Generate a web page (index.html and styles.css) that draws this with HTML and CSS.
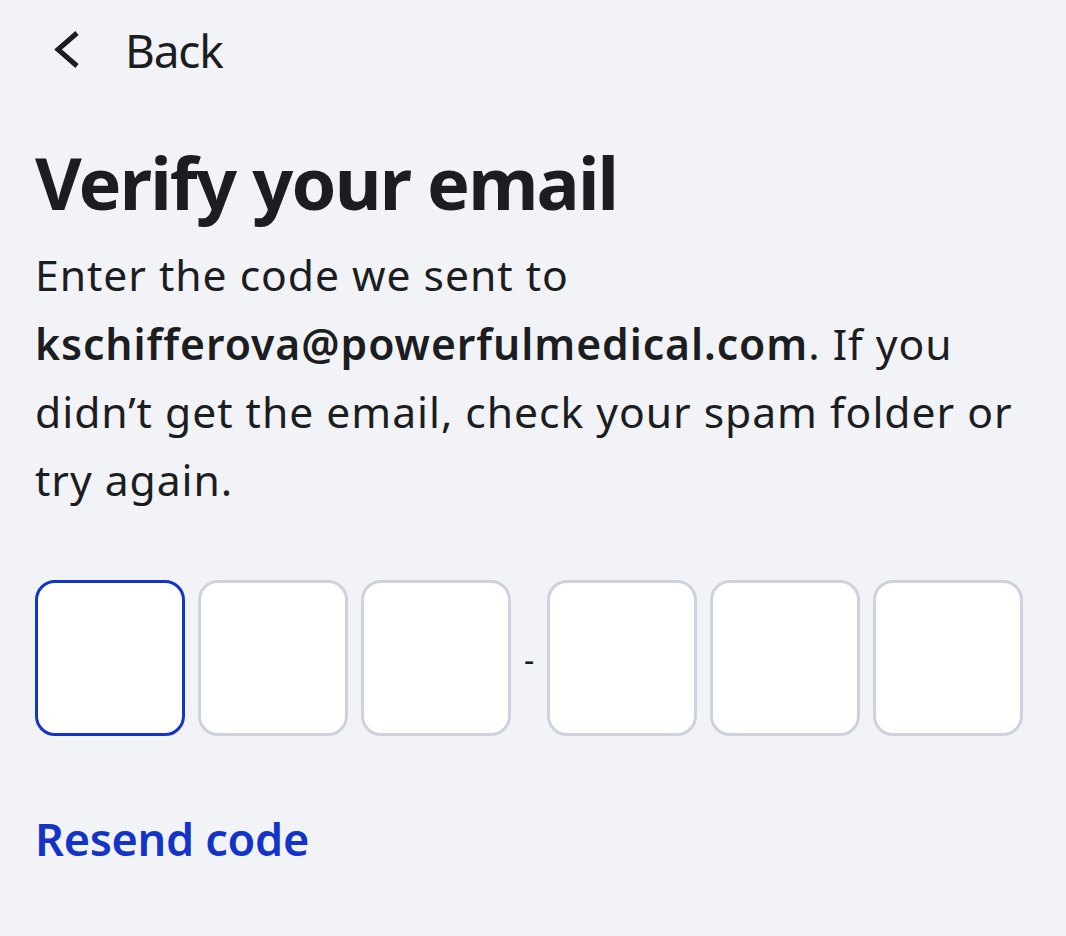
FILE: index.html
```html
<!DOCTYPE html>
<html lang="en">
<head>
  <meta charset="UTF-8">
  <meta name="viewport" content="width=device-width, initial-scale=1.0">
  <title>Verify your email</title>
  <link rel="stylesheet" href="styles.css">
</head>
<body>

<div class="verify-screen">
  <a class="back-link" href="#">
    <svg class="back-icon" width="30" height="40" viewBox="0 0 30 40" fill="none">
      <path d="M25 3 L6 19.5 L25 36" stroke="#1c1d21" stroke-width="5"/>
    </svg>
    <span>Back</span>
  </a>

  <h1>Verify your email</h1>
  <p class="intro">
    Enter the code we sent to <strong>kschifferova@powerfulmedical.com</strong>. If you didn’t get the email, check your spam folder or try again.
  </p>

  <form class="code-row" id="codeForm">
    <input class="code-cell focused" type="text" maxlength="1" inputmode="numeric">
    <input class="code-cell" type="text" maxlength="1" inputmode="numeric">
    <input class="code-cell" type="text" maxlength="1" inputmode="numeric">
    <span class="code-sep">-</span>
    <input class="code-cell" type="text" maxlength="1" inputmode="numeric">
    <input class="code-cell" type="text" maxlength="1" inputmode="numeric">
    <input class="code-cell" type="text" maxlength="1" inputmode="numeric">
  </form>

  <a class="resend" href="#">Resend code</a>
</div>

</body>
</html>
```

FILE: styles.css
```css
body { margin: 0; background: #f2f3f7; font-family: "Noto Sans", "Open Sans", sans-serif; color: #1c1d21; }
.verify-screen { padding: 0 43px 0 35px; }

/* Top bar */
.back-link { display: flex; align-items: center; gap: 43px; height: 100px; padding-left: 17px; color: #1c1d21; text-decoration: none; font-size: 46px; letter-spacing: -1.2px; }
.back-icon { flex: none; }

h1 { margin: 39px 0 0; font-size: 72px; font-weight: 700; line-height: 1.2; letter-spacing: -1.8px; }
.intro { margin: 16px 0 0; font-size: 42.67px; line-height: 1.6; letter-spacing: 0.95px; }
.intro strong { font-weight: 600; }

/* Code inputs */
.code-row { display: flex; align-items: center; gap: 13px; margin-top: 66px; }
.code-cell {
  box-sizing: border-box;
  width: 150px;
  height: 156px;
  padding: 0;
  border: 3px solid #cdd2de;
  border-radius: 20px;
  background: #fff;
  font-family: inherit;
  font-size: 56px;
  text-align: center;
  outline: none;
}
.code-cell.focused { border-color: #1434c8; }
.code-sep { width: 10px; font-size: 32px; line-height: 1; margin-top: 4px; }

.resend { display: inline-block; margin-top: 71px; font-size: 45px; font-weight: 600; line-height: 1.4; color: #1434c8; text-decoration: none; letter-spacing: -0.3px; }
```
